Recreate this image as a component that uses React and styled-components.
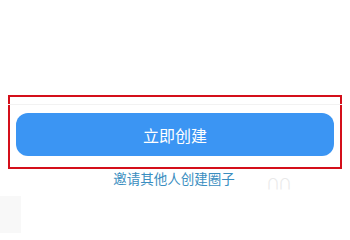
import React from 'react';
import styled, { createGlobalStyle } from 'styled-components';

const GlobalStyle = createGlobalStyle`
    html, body {
        margin: 0;
        padding: 0;
        background: #ffffff;
        font-family: "Noto Sans CJK SC", "Noto Sans", sans-serif;
    }
`;

const Page = styled.div`
    width: 350px;
    height: 233px;
    padding-top: 95px;
    box-sizing: border-box;
    display: flex;
    flex-direction: column;
    overflow: hidden;
    position: relative;
`;

const Highlight = styled.div`
    margin: 0 8px;
    height: 74px;
    box-sizing: border-box;
    border: 2px solid #d40f1a;
    display: flex;
    flex-direction: column;
`;

const Divider = styled.div`
    height: 7px;
    border-bottom: 1px solid #f2f2f2;
    margin: 0 -2px;
`;

const ButtonArea = styled.div`
    padding: 8px 6px 11px;
`;

const CreateButton = styled.button`
    width: 100%;
    height: 43px;
    border: none;
    border-radius: 12px;
    background: #3b95f3;
    color: #ffffff;
    font-family: "Noto Sans CJK SC", sans-serif;
    font-size: 16px;
    display: flex;
    align-items: center;
    justify-content: center;
    padding: 0;
    cursor: pointer;
`;

const InviteRow = styled.div`
    display: flex;
    justify-content: center;
`;

const InviteLink = styled.span`
    font-size: 13.5px;
    line-height: 18px;
    color: #3a8ec0;
    margin-left: -2px;
`;

const Ghost = styled.span`
    position: absolute;
    left: 266px;
    top: 173px;
    font-size: 14px;
    color: #e9e9e9;
    letter-spacing: -2px;
`;

const Corner = styled.div`
    position: absolute;
    left: 0;
    top: 196px;
    width: 21px;
    height: 37px;
    background: #f8f8f8;
`;

export default function App() {
    return (
        <>
            <GlobalStyle />
            <Page>
                <Highlight>
                    <Divider />
                    <ButtonArea>
                        <CreateButton>立即创建</CreateButton>
                    </ButtonArea>
                </Highlight>
                <InviteRow>
                    <InviteLink>邀请其他人创建圈子</InviteLink>
                </InviteRow>
                <Ghost>∩∩</Ghost>
                <Corner />
            </Page>
        </>
    );
}
